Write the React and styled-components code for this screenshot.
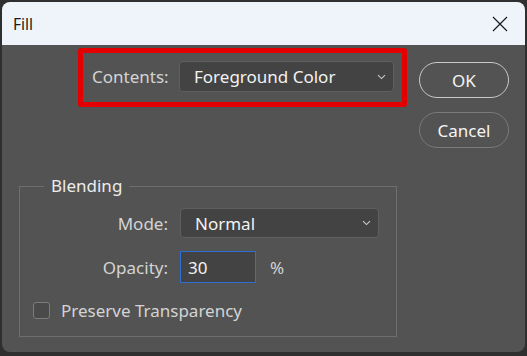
import React from "react";
import styled, { createGlobalStyle } from "styled-components";

const Global = createGlobalStyle`
  html, body { margin: 0; padding: 0; background: #353535; }
  body { font-family: "Segoe UI", "Noto Sans", "Open Sans", sans-serif; }
  * { box-sizing: border-box; }
`;

const Page = styled.div`
  width: 527px;
  height: 356px;
  padding: 2px;
  background: #2f2f2f;
`;

const Window = styled.div`
  width: 523px;
  height: 350px;
  border-radius: 8px;
  overflow: hidden;
  background: #535353;
  display: flex;
  flex-direction: column;
`;

const TitleBar = styled.div`
  height: 43px;
  flex: none;
  background: #eef4f9;
  display: flex;
  align-items: center;
  justify-content: space-between;
  padding: 0 17px 0 11px;
  color: #1b1b1b;
  font-size: 15.5px;
`;

const Body = styled.div`
  flex: 1;
  display: flex;
  flex-direction: column;
  padding: 3px 0 0 17px;
  color: #dcdcdc;
  font-size: 17px;
`;

const TopRow = styled.div`
  display: flex;
  align-items: flex-start;
  height: 100px;
  padding-left: 59px;
`;

const Highlight = styled.div`
  width: 329px;
  height: 59px;
  border: 5px solid #e40000;
  border-radius: 3px;
  display: flex;
  align-items: center;
  justify-content: space-between;
  padding: 0 8px 2px 9px;
`;

const Label = styled.span`
  color: #d4d4d4;
  font-size: 17px;
  white-space: nowrap;
  text-align: ${(p) => (p.$right ? "right" : "left")};
`;

const Select = styled.div`
  width: ${(p) => p.$w}px;
  height: ${(p) => p.$h}px;
  background: #434343;
  border: 1px solid #5f5f5f;
  border-radius: 4px;
  display: flex;
  align-items: center;
  justify-content: space-between;
  padding: 0 7px 0 14px;
  color: #f2f2f2;
  font-size: 17px;
`;

const Buttons = styled.div`
  margin: 14px 0 0 12px;
  display: flex;
  flex-direction: column;
  gap: 14px;
`;

const Button = styled.div`
  width: 90px;
  height: 36px;
  border-radius: 18px;
  border: 1.5px solid ${(p) => (p.$primary ? "#c9c9c9" : "#7a7a7a")};
  display: flex;
  align-items: center;
  justify-content: center;
  color: #f4f4f4;
  font-size: 17px;
`;

const Group = styled.fieldset`
  margin: 27px 0 0 0;
  width: 378px;
  padding: 11px 0 16px 0;
  border: 1px solid #6e6e6e;
  border-radius: 0;
  display: grid;
  grid-template-columns: 148px 1fr;
  column-gap: 12px;
  row-gap: 13px;
  align-items: center;
`;

const Legend = styled.legend`
  margin-left: 24px;
  padding: 0 7px;
  color: #ececec;
  font-size: 17px;
  line-height: 22px;
`;

const Control = styled.div`
  display: flex;
  align-items: center;
  gap: 14px;
`;

const Input = styled.div`
  width: 76px;
  height: 32px;
  background: #434343;
  border: 1px solid #2f6fd3;
  display: flex;
  align-items: center;
  padding-left: 7px;
  color: #f2f2f2;
  font-size: 17px;
`;

const CheckRow = styled.div`
  grid-column: 1 / -1;
  display: flex;
  align-items: center;
  gap: 11px;
  padding-left: 13px;
  margin-top: 4px;
  height: 20px;
`;

const Box = styled.div`
  width: 17px;
  height: 17px;
  border-radius: 3px;
  border: 1px solid #7c7c7c;
  background: #4a4a4a;
`;

const Chevron = () => (
  <svg width="9" height="6" viewBox="0 0 9 6">
    <path d="M1 1.2 L4.5 4.6 L8 1.2" fill="none" stroke="#c9c9c9" strokeWidth="1.1" />
  </svg>
);

const CloseIcon = () => (
  <svg width="16" height="16" viewBox="0 0 16 16">
    <path d="M1 1 L15 15 M15 1 L1 15" stroke="#1b1b1b" strokeWidth="1.2" />
  </svg>
);

export default function App() {
  return (
    <Page>
      <Global />
      <Window>
        <TitleBar>
          <span>Fill</span>
          <CloseIcon />
        </TitleBar>
        <Body>
          <TopRow>
            <Highlight>
              <Label>Contents:</Label>
              <Select $w={215} $h={31}>
                <span>Foreground Color</span>
                <Chevron />
              </Select>
            </Highlight>
            <Buttons>
              <Button $primary>OK</Button>
              <Button>Cancel</Button>
            </Buttons>
          </TopRow>
          <Group>
            <Legend>Blending</Legend>
            <Label $right>Mode:</Label>
            <Select $w={199} $h={30}>
              <span>Normal</span>
              <Chevron />
            </Select>
            <Label $right>Opacity:</Label>
            <Control>
              <Input>30</Input>
              <Label>%</Label>
            </Control>
            <CheckRow>
              <Box />
              <Label>Preserve Transparency</Label>
            </CheckRow>
          </Group>
        </Body>
      </Window>
    </Page>
  );
}
